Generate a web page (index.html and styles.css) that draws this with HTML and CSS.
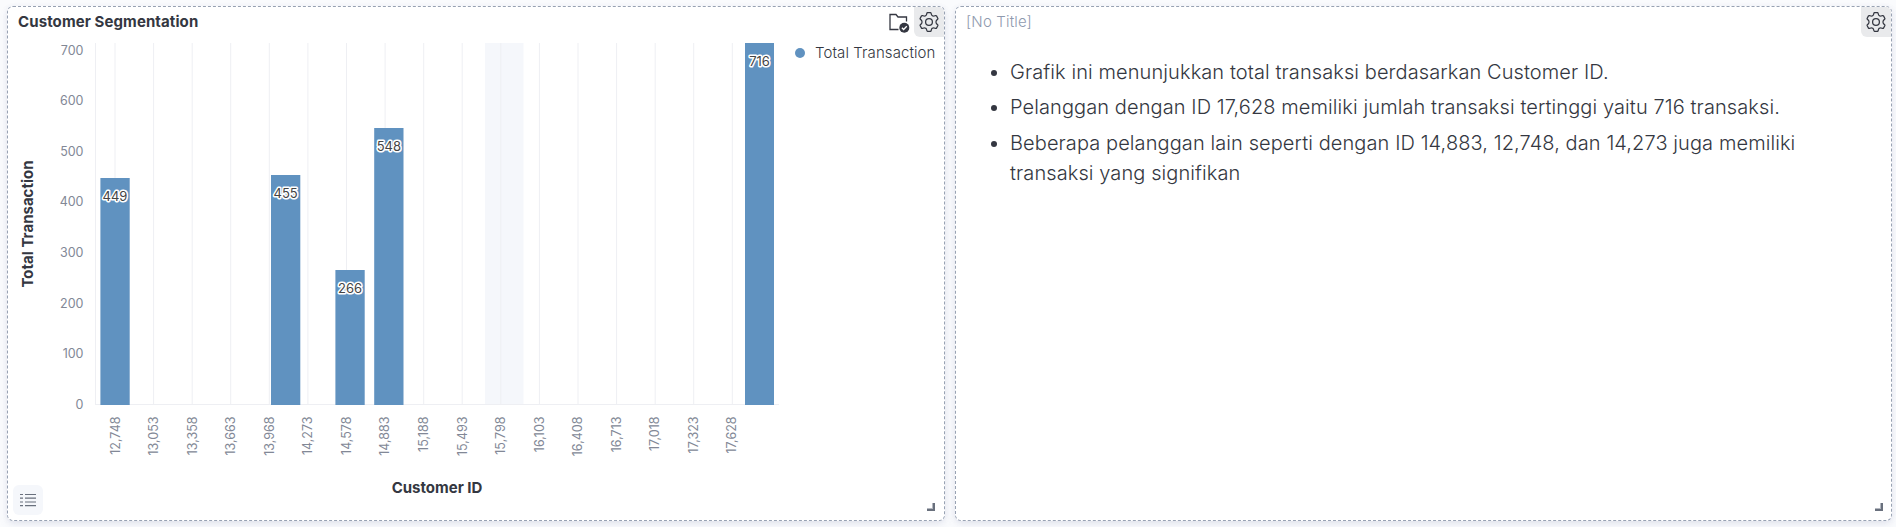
FILE: index.html
```
<!DOCTYPE html>
<html lang="id">
<head>
<meta charset="utf-8">
<title>Customer Segmentation</title>
<link rel="stylesheet" href="styles.css">
</head>
<body>
<svg class="defs" aria-hidden="true">
  <symbol id="gear" viewBox="0 0 20 20">
    <path d="M8.700 .6h2.600q.6 0 .8.700l.4 1.300q.3.900 1.100 1.200.7.400 1.500.2l1.400-.4q.7-.2 1 .3l1.300 2.300q.3.600-.2 1.100l-1 1q-.6.600-.6 1.700t.6 1.700l1 1q.5.500.2 1.100l-1.300 2.300q-.3.500-1 .3l-1.400-.4q-.8-.2-1.500.2-.8.300-1.100 1.200l-.4 1.300q-.2.700-.8.700h-2.600q-.6 0-.8-.7l-.4-1.300q-.3-.9-1.100-1.200-.7-.4-1.500-.2l-1.400.4q-.7.200-1-.3l-1.300-2.300q-.3-.6.2-1.100l1-1q.6-.6.6-1.700t-.6-1.700l-1-1q-.5-.5-.2-1.100l1.300-2.300q.3-.5 1-.3l1.400.4q.8.200 1.500-.2.8-.3 1.100-1.200l.4-1.300q.2-.7.800-.7z"/>
    <circle cx="10" cy="10" r="3.400"/>
  </symbol>
</svg>
<main class="dashboard">
  <section class="panel">
    <header class="panel-header">
      <h2 class="title">Customer Segmentation</h2>
      <div class="actions">
        <svg class="folder" viewBox="0 0 20 20"><path d="M9.500 16.500H1V1.500h6l2 2.500h8.500v4.500"/><circle cx="15.300" cy="14.700" r="5"/><path class="check" d="M12.900 14.800l1.700 1.700 3.200-3.300"/></svg>
        <button class="gear-button" aria-label="Options"><svg class="gear"><use href="#gear"/></svg></button>
      </div>
    </header>
    <div class="panel-body">
      <svg class="chart" viewBox="0 0 780 477">
        <rect class="band" x="477" y="5" width="38.500" height="361"/>
        <path class="grid" d="M87.500 5v361M107 5v361M145.600 5v361M184.200 5v361M222.700 5v361M261.300 5v361M299.900 5v361M338.500 5v361M377.100 5v361M415.700 5v361M454.200 5v361M492.800 5v361M531.400 5v361M570 5v361M608.600 5v361M647.200 5v361M685.700 5v361M724.300 5v361M87 366.500h684"/>
        <g class="bar">
          <rect x="92.400" y="140" width="29.300" height="227"/>
          <rect x="263" y="137" width="29.300" height="230"/>
          <rect x="327.400" y="232" width="29.300" height="135"/>
          <rect x="366.200" y="90" width="29.300" height="277"/>
          <rect x="737" y="5" width="29" height="362"/>
        </g>
        <g class="value">
          <text x="107" y="162.500">449</text><text x="277.600" y="159.500">455</text><text x="342" y="254.500">266</text><text x="380.800" y="112.500">548</text><text x="751.500" y="28.300">716</text>
        </g>
        <g class="tick y">
          <text x="75.500" y="17">700</text><text x="75.500" y="67.300">600</text><text x="75.500" y="118">500</text><text x="75.500" y="168.300">400</text><text x="75.500" y="219.300">300</text><text x="75.500" y="269.500">200</text><text x="75.500" y="320">100</text><text x="75.500" y="371">0</text>
        </g>
        <g class="tick x">
          <text transform="translate(111.500 378.500) rotate(-90)">12,748</text>
          <text transform="translate(149.500 378.500) rotate(-90)">13,053</text>
          <text transform="translate(188.500 378.500) rotate(-90)">13,358</text>
          <text transform="translate(226.500 378.500) rotate(-90)">13,663</text>
          <text transform="translate(265.500 378.500) rotate(-90)">13,968</text>
          <text transform="translate(303.500 378.500) rotate(-90)">14,273</text>
          <text transform="translate(342.500 378.500) rotate(-90)">14,578</text>
          <text transform="translate(380.500 378.500) rotate(-90)">14,883</text>
          <text transform="translate(419.500 378.500) rotate(-90)">15,188</text>
          <text transform="translate(458.500 378.500) rotate(-90)">15,493</text>
          <text transform="translate(496.500 378.500) rotate(-90)">15,798</text>
          <text transform="translate(535.500 378.500) rotate(-90)">16,103</text>
          <text transform="translate(573.500 378.500) rotate(-90)">16,408</text>
          <text transform="translate(612.500 378.500) rotate(-90)">16,713</text>
          <text transform="translate(650.500 378.500) rotate(-90)">17,018</text>
          <text transform="translate(689.500 378.500) rotate(-90)">17,323</text>
          <text transform="translate(727.500 378.500) rotate(-90)">17,628</text>
        </g>
        <text class="axis" x="429" y="455">Customer ID</text>
        <text class="axis" transform="translate(25 186) rotate(-90)">Total Transaction</text>
      </svg>
      <div class="legend"><span class="dot"></span>Total Transaction</div>
      <button class="list-button" aria-label="Legend"><svg class="list" viewBox="0 0 16 14"><path d="M0 1.500h3M5 1.500h11M0 5.200h3M5 5.200h11M0 9h3M5 9h11M0 12.700h3M5 12.700h11"/></svg></button>
    </div>
    <span class="resize"></span>
  </section>
  <section class="panel">
    <header class="panel-header">
      <h2 class="title untitled">[No Title]</h2>
      <div class="actions"><button class="gear-button" aria-label="Options"><svg class="gear"><use href="#gear"/></svg></button></div>
    </header>
    <ul class="notes">
      <li>Grafik ini menunjukkan total transaksi berdasarkan Customer ID.</li>
      <li>Pelanggan dengan ID 17,628 memiliki jumlah transaksi tertinggi yaitu 716 transaksi.</li>
      <li>Beberapa pelanggan lain seperti dengan ID 14,883, 12,748, dan 14,273 juga memiliki transaksi yang signifikan</li>
    </ul>
    <span class="resize"></span>
  </section>
</main>
</body>
</html>
```
FILE: styles.css
```
* { box-sizing: border-box; }
body { margin: 0; background: #fafbfd; color: #343741; font-family: Inter, sans-serif; }
.defs { position: absolute; width: 0; height: 0; }
.dashboard { display: grid; grid-template-columns: 938px 937px; gap: 10px; height: 527px; padding: 6px 4px 5px 7px; overflow: hidden; }
.panel { position: relative; display: flex; flex-direction: column; height: 515px; border: 1px dashed #98a2b3; border-radius: 6px; background: #fff; box-shadow: 0 1px 5px rgba(105, 112, 160, .1), 0 4px 10px rgba(105, 112, 160, .09); }
.panel-header { display: flex; justify-content: space-between; height: 31px; }
.title { margin: 0; padding-left: 10px; font-size: 15px; line-height: 30px; font-weight: 700; letter-spacing: .1px; }
.untitled { color: #8f9aae; font-weight: 300; letter-spacing: .15px; }
.actions { display: flex; }
.folder { width: 20px; height: 20px; margin: 6px 5px 0 0; fill: none; stroke: #343741; stroke-width: 1.300; overflow: visible; }
.folder circle { fill: #343741; stroke: none; }
.folder .check { stroke: #fff; }
.gear-button { display: grid; place-items: center; width: 30px; height: 30px; padding: 0; border: 0; border-radius: 0 5px 0 6px; background: #e9eaec; }
.gear { width: 20px; height: 20px; fill: none; stroke: #343741; stroke-width: 1.250; stroke-linejoin: round; overflow: visible; }
.panel-body { position: relative; display: flex; flex: 1; align-items: flex-start; }
.chart { width: 780px; height: 477px; flex: none; }
.band { fill: #f5f7fb; }
.grid { fill: none; stroke: #eeeff3; stroke-width: 1; }
.bar { fill: #6092c0; }
.tick { font-size: 12.500px; fill: #828896; text-anchor: end; }
.value { font-size: 13px; fill: #444; stroke: #fff; stroke-width: 3px; stroke-linejoin: round; paint-order: stroke; text-anchor: middle; }
.axis { font-size: 15px; font-weight: 700; fill: #343741; text-anchor: middle; }
.legend { display: flex; align-items: center; gap: 10px; padding: 5px 0 0 7px; font-size: 15px; font-weight: 300; letter-spacing: .09px; line-height: 19px; white-space: nowrap; }
.dot { width: 10px; height: 10px; border-radius: 50%; background: #6092c0; }
.list-button { position: absolute; left: 5px; bottom: 5px; display: grid; place-items: center; width: 30px; height: 30px; padding: 0; border: 0; border-radius: 6px; background: #f5f7fb; }
.list { width: 16px; height: 14px; stroke: #69707d; stroke-width: 1.200; }
.resize { position: absolute; right: 9px; bottom: 9px; width: 8px; height: 8px; border: solid #69707d; border-width: 0 2px 2px 0; box-shadow: inset -1px -1px #b4b8c0; }
.panel + .panel .resize { right: 8px; }
.notes { margin: 0; padding: 19px 50px 0 54px; font-size: 20px; font-weight: 300; letter-spacing: .09px; line-height: 30px; }
.notes li { margin-bottom: 5.300px; }
```
